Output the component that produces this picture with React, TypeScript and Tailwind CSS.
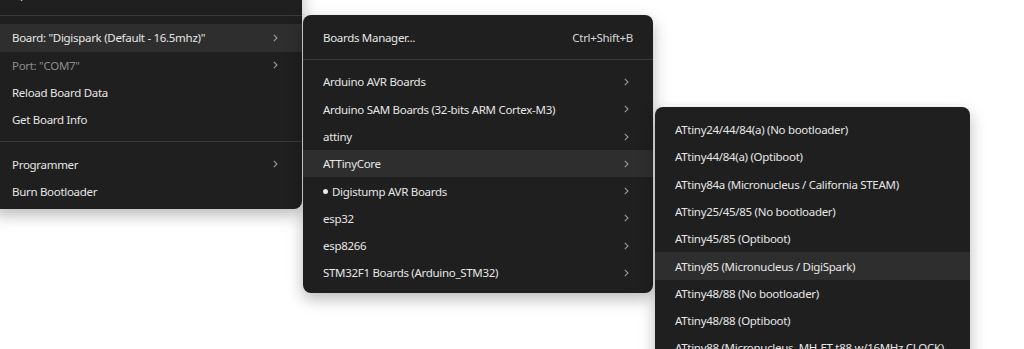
import React from 'react';

type Item =
  | { kind: 'sep' }
  | { kind: 'item'; label: string; sub?: boolean; active?: boolean; disabled?: boolean; shortcut?: string; dot?: boolean };

const toolsMenu: Item[] = [
  { kind: 'item', label: 'Upload SSL Root Certificates' },
  { kind: 'sep' },
  { kind: 'item', label: 'Board: "Digispark (Default - 16.5mhz)"', sub: true, active: true },
  { kind: 'item', label: 'Port: "COM7"', sub: true, disabled: true },
  { kind: 'item', label: 'Reload Board Data' },
  { kind: 'item', label: 'Get Board Info' },
  { kind: 'sep' },
  { kind: 'item', label: 'Programmer', sub: true },
  { kind: 'item', label: 'Burn Bootloader' },
];

const boardsMenu: Item[] = [
  { kind: 'item', label: 'Boards Manager...', shortcut: 'Ctrl+Shift+B' },
  { kind: 'sep' },
  { kind: 'item', label: 'Arduino AVR Boards', sub: true },
  { kind: 'item', label: 'Arduino SAM Boards (32-bits ARM Cortex-M3)', sub: true },
  { kind: 'item', label: 'attiny', sub: true },
  { kind: 'item', label: 'ATTinyCore', sub: true, active: true },
  { kind: 'item', label: 'Digistump AVR Boards', sub: true, dot: true },
  { kind: 'item', label: 'esp32', sub: true },
  { kind: 'item', label: 'esp8266', sub: true },
  { kind: 'item', label: 'STM32F1 Boards (Arduino_STM32)', sub: true },
];

const coreMenu: Item[] = [
  { kind: 'item', label: 'ATtiny24/44/84(a) (No bootloader)' },
  { kind: 'item', label: 'ATtiny44/84(a) (Optiboot)' },
  { kind: 'item', label: 'ATtiny84a (Micronucleus / California STEAM)' },
  { kind: 'item', label: 'ATtiny25/45/85 (No bootloader)' },
  { kind: 'item', label: 'ATtiny45/85 (Optiboot)' },
  { kind: 'item', label: 'ATtiny85 (Micronucleus / DigiSpark)', active: true },
  { kind: 'item', label: 'ATtiny48/88 (No bootloader)' },
  { kind: 'item', label: 'ATtiny48/88 (Optiboot)' },
  { kind: 'item', label: 'ATtiny88 (Micronucleus, MH-ET t88 w/16MHz CLOCK)' },
];

const Chevron = () => (
  <svg width="5" height="8" viewBox="0 0 5 8" className="shrink-0">
    <path d="M0.8 0.8 L4 4 L0.8 7.2" fill="none" stroke="#9a9a9a" strokeWidth="1.1" />
  </svg>
);

const MenuList: React.FC<{ items: Item[] }> = ({ items }) => (
  <>
    {items.map((it, i) =>
      it.kind === 'sep' ? (
        <div key={i} className="h-[17px] flex items-center">
          <div className="h-px w-full bg-[#3a3a3a]" />
        </div>
      ) : (
        <div
          key={i}
          className={`h-[27.3px] flex items-center pl-[20px] pr-[24px] ${it.active ? 'bg-[#2e2e2e]' : ''}`}
        >
          {it.dot && <span className="w-[5px] h-[5px] rounded-full bg-[#e8e8e8] mr-[4px]" />}
          <span className={`flex-1 whitespace-nowrap ${it.disabled ? 'text-[#8c8c8c]' : 'text-[#e6e6e6]'}`}>
            {it.label}
          </span>
          {it.shortcut && <span className="text-[#d8d8d8] -mr-[4px]">{it.shortcut}</span>}
          {it.sub && <Chevron />}
        </div>
      )
    )}
  </>
);

export default function App() {
  return (
    <div
      className="relative w-[1024px] h-[349px] overflow-hidden bg-white text-[11.5px] tracking-[-0.3px]"
      style={{ fontFamily: '"Segoe UI", "Noto Sans", sans-serif' }}
    >
      <div className="absolute left-[-8px] top-[-29px] w-[310px] pt-[9px] pb-[4px] bg-[#1f1f1f] rounded-lg shadow-[0_6px_16px_rgba(0,0,0,0.28)]">
        <MenuList items={toolsMenu} />
      </div>
      <div className="absolute left-[303px] top-[15px] w-[350px] pt-[9px] pb-[6px] bg-[#1f1f1f] rounded-lg shadow-[0_6px_16px_rgba(0,0,0,0.28)]">
        <MenuList items={boardsMenu} />
      </div>
      <div className="absolute left-[655px] top-[107px] w-[315px] pt-[9px] pb-[6px] bg-[#1f1f1f] rounded-lg shadow-[0_6px_16px_rgba(0,0,0,0.28)]">
        <MenuList items={coreMenu} />
      </div>
    </div>
  );
}
